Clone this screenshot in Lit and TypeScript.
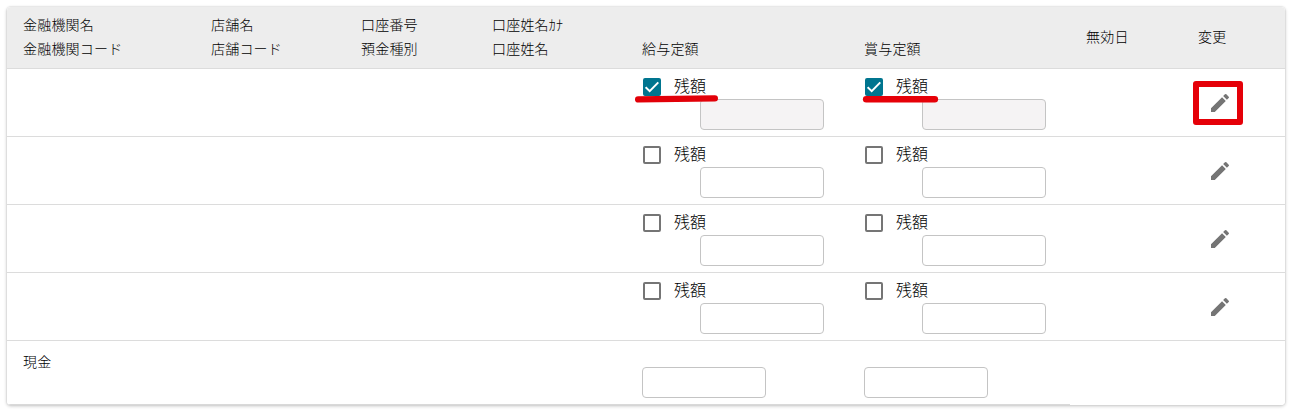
import { LitElement, html, css, svg } from "lit";
import { customElement, property } from "lit/decorators.js";

@customElement("balance-cell")
class BalanceCell extends LitElement {
  @property({ type: Boolean }) checked = false;
  @property({ type: Boolean }) slanted = false;

  static styles = css`
    :host { display: block; position: relative; height: 67px; }
    .label { display: flex; align-items: center; gap: 13px; height: 18px; padding: 9px 0 0 17px; }
    .text { font-size: 16px; line-height: 18px; padding-bottom: 4px; letter-spacing: 0; }
    .box { box-sizing: border-box; width: 18px; height: 18px; border: 2px solid #757575; border-radius: 2px; flex: none; }
    .on { border-color: #00758f; background: #00758f; }
    .box svg { display: block; width: 14px; height: 14px; }
    .field { box-sizing: border-box; width: 124px; height: 31px; border: 1px solid #c4c4c4; border-radius: 4px; margin: 3px 0 0 74px; background: #fff; }
    .disabled { background: #f5f3f4; }
    .mark { position: absolute; left: 8px; top: 24px; width: 88px; height: 12px; }
  `;

  render() {
    return html`
      <div class="label">
        <span class="box ${this.checked ? "on" : ""}">
          ${this.checked ? html`<svg viewBox="0 0 14 14"><path d="M0.6 7.2 4.7 11.2 13.3 2.4" fill="none" stroke="#fff" stroke-width="2"/></svg>` : ""}
        </span>
        <span class="text">残額</span>
      </div>
      <div class="field ${this.checked ? "disabled" : ""}"></div>
      ${this.checked ? html`<svg class="mark" viewBox="0 0 88 12">
        ${this.slanted
          ? svg`<path d="M4.2 6.4 80.8 5.4" stroke="#e20008" stroke-width="6.4" stroke-linecap="round"/>`
          : svg`<path d="M10.2 6.2H78.8" stroke="#e60008" stroke-width="6.6" stroke-linecap="round"/>`}
      </svg>` : ""}
    `;
  }
}

@customElement("app-root")
class AppRoot extends LitElement {
  static styles = css`
    :host { display: block; box-sizing: border-box; height: 417px; padding: 7px 6px 12px 7px; background: #fff; color: #000; font-family: "Noto Sans CJK JP", sans-serif; font-weight: 300; font-size: 14px; letter-spacing: 0.2px; }
    .card { width: 1278px; height: 398px; border-radius: 4px; overflow: hidden; background: #fff; }
    .shadow { width: 1278px; border-radius: 4px; box-shadow: 0 1px 3px 1px rgba(0, 0, 0, 0.14), 0 0 1px 1px rgba(0, 0, 0, 0.05); }
    .row { display: grid; grid-template-columns: 188px 150px 131px 150px 222px 222px 112px 103px; height: 67px; border-bottom: 1px solid #dcdcdc; }
    .head { height: 61px; background: #ededed; }
    .cell { padding: 5px 0 0 16px; line-height: 24px; white-space: nowrap; }
    .low { padding-top: 29px; }
    .mid { padding-top: 17px; }
    .cash { height: 63px; border-bottom: 0; }
    .cash .cell { padding-top: 8px; }
    .field { box-sizing: border-box; width: 124px; height: 31px; border: 1px solid #c4c4c4; border-radius: 4px; margin: 26px 0 0 16px; }
    .edit { position: relative; padding: 22px 0 0 26px; }
    .edit svg { display: block; width: 24px; height: 24px; fill: #757575; }
    .frame { position: absolute; left: 11px; top: 12px; width: 38px; height: 32px; border: 6px solid #e50008; border-radius: 3px; }
    .base { width: 1063px; height: 1px; background: #d9d9d9; }
  `;

  render() {
    return html`<div class="shadow"><div class="card">
      <div class="row head">
        <div class="cell">金融機関名<br>金融機関コード</div>
        <div class="cell">店舗名<br>店舗コード</div>
        <div class="cell">口座番号<br>預金種別</div>
        <div class="cell">口座姓名ｶﾅ<br>口座姓名</div>
        <div class="cell low">給与定額</div>
        <div class="cell low">賞与定額</div>
        <div class="cell mid">無効日</div>
        <div class="cell mid">変更</div>
      </div>
      ${[true, false, false, false].map((on) => html`<div class="row">
        <div></div><div></div><div></div><div></div>
        <balance-cell ?checked=${on} slanted></balance-cell>
        <balance-cell ?checked=${on}></balance-cell>
        <div></div>
        <div class="edit">
          <svg viewBox="0 0 24 24"><path d="M3 17.25V21h3.75L17.81 9.94l-3.75-3.75L3 17.25zM20.71 7.04a1 1 0 0 0 0-1.41l-2.34-2.34a1 1 0 0 0-1.41 0l-1.83 1.83 3.75 3.75 1.83-1.83z"/></svg>
          ${on ? html`<div class="frame"></div>` : ""}
        </div>
      </div>`)}
      <div class="row cash">
        <div class="cell">現金</div><div></div><div></div><div></div>
        <div class="field"></div><div class="field"></div><div></div><div></div>
      </div>
      <div class="base"></div>
    </div></div>`;
  }
}
